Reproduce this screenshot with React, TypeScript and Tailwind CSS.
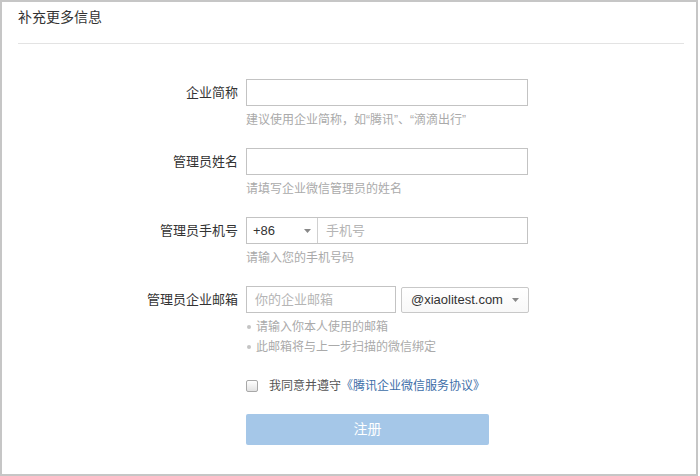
const font = "font-['Liberation_Sans','Noto_Sans_CJK_SC',sans-serif]";

function Caret() {
  return (
    <svg width="7" height="4" viewBox="0 0 7 4" className="shrink-0">
      <path d="M0 0h7L3.5 4z" fill="#888" />
    </svg>
  );
}

function Row({ label, children }: { label: string; children: React.ReactNode }) {
  return (
    <div className="flex items-start">
      <div className="w-[244px] shrink-0 pr-2 text-right text-[13px] leading-[27px] text-[#333]">{label}</div>
      <div className="w-[284px]">{children}</div>
    </div>
  );
}

function Hint({ children }: { children: React.ReactNode }) {
  return <div className="mt-[6px] text-[12px] leading-[16px] text-[#aaa]">{children}</div>;
}

export default function App() {
  return (
    <div className={`${font} w-[698px] h-[476px] border-2 border-[#c6c6c6] bg-white`}>
      {/* Header */}
      <div className="ml-[16px] mr-[12px] h-[42px] border-b border-[#e3e3e3] pt-[5px] text-[14px] leading-[20px] text-[#333]">
        补充更多信息
      </div>

      <div className="mt-[35px] flex flex-col gap-[20px]">
        <Row label="企业简称">
          <div className="h-[27px] w-[282px] border border-[#c3c3c3] bg-white" />
          <Hint>建议使用企业简称，如“腾讯”、“滴滴出行”</Hint>
        </Row>

        <Row label="管理员姓名">
          <div className="h-[27px] w-[282px] border border-[#c3c3c3] bg-white" />
          <Hint>请填写企业微信管理员的姓名</Hint>
        </Row>

        <Row label="管理员手机号">
          <div className="flex h-[27px] w-[282px] border border-[#c3c3c3] bg-white">
            <div className="flex w-[71px] shrink-0 items-center justify-between border-r border-[#d0d0d0] pl-[6px] pr-[6px] text-[13px] text-[#333]">
              <span>+86</span>
              <Caret />
            </div>
            <div className="flex items-center pl-[8px] text-[13px] text-[#b5b5b5]">手机号</div>
          </div>
          <Hint>请输入您的手机号码</Hint>
        </Row>

        <Row label="管理员企业邮箱">
          <div className="flex items-start gap-[5px]">
            <div className="flex h-[27px] w-[150px] items-center border border-[#c3c3c3] bg-white pl-[8px] text-[13px] text-[#b5b5b5]">
              你的企业邮箱
            </div>
            <div className="mt-[1px] flex h-[26px] w-[128px] items-center justify-between rounded-[2px] border border-[#c8c8c8] bg-gradient-to-b from-white to-[#f8f8f8] pl-[9px] pr-[9px] text-[13px] text-[#333]">
              <span>@xiaolitest.com</span>
              <Caret />
            </div>
          </div>
          <ul className="mt-[4px] text-[12px] leading-[20px] text-[#aaa]">
            <li className="flex items-center gap-[5px] pl-[1px]">
              <span className="h-[4px] w-[4px] rounded-full bg-[#c4c4c4]" />
              请输入你本人使用的邮箱
            </li>
            <li className="flex items-center gap-[5px] pl-[1px]">
              <span className="h-[4px] w-[4px] rounded-full bg-[#c4c4c4]" />
              此邮箱将与上一步扫描的微信绑定
            </li>
          </ul>
        </Row>
      </div>

      <div className="ml-[244px] mt-[19px] flex h-[20px] items-center text-[12px]">
        <span className="h-[12px] w-[12px] rounded-[2px] border border-[#a8a8a8] bg-gradient-to-b from-white to-[#e2e2e2]" />
        <span className="ml-[11px] text-[#555]">我同意并遵守</span>
        <span className="text-[#3d6ea8]">《腾讯企业微信服务协议》</span>
      </div>

      <button className="ml-[244px] mt-[18px] h-[31px] w-[243px] rounded-[2px] bg-[#a5c7e8] text-[14px] text-white">
        注册
      </button>
    </div>
  );
}
